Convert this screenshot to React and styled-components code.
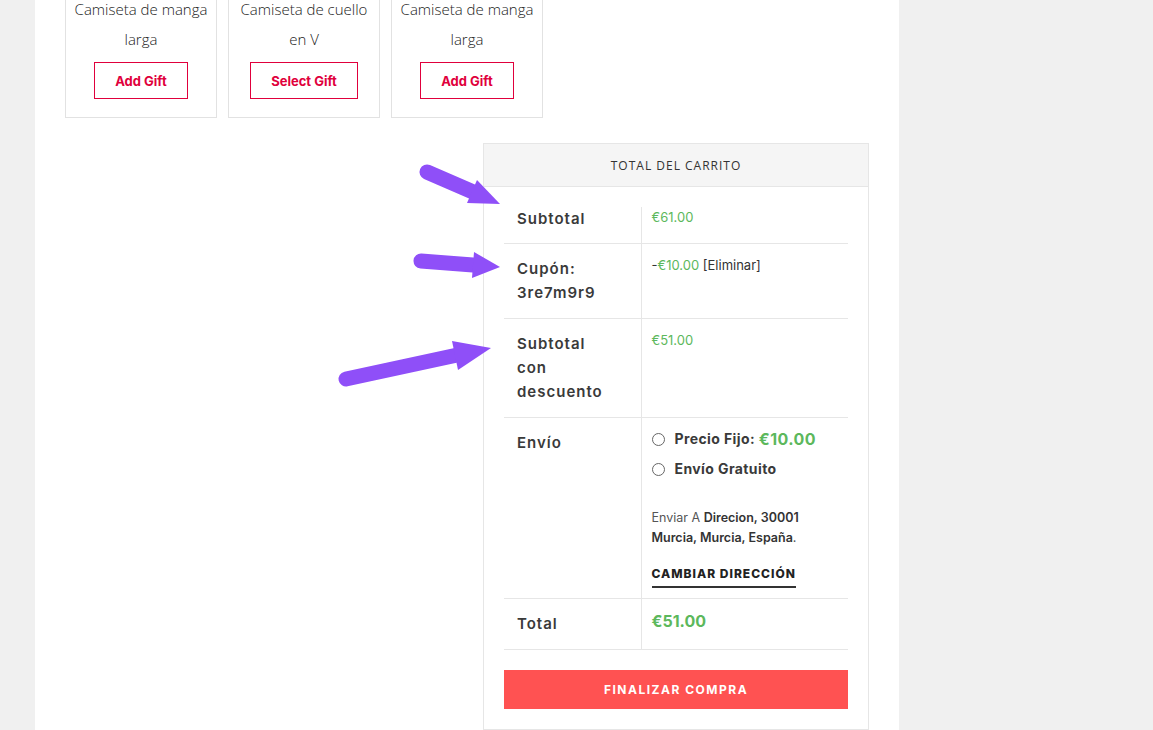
import React from 'react'
import styled, { createGlobalStyle } from 'styled-components'

const GlobalStyle = createGlobalStyle`
  html, body {
    margin: 0;
    padding: 0;
    background: #f0f0f0;
  }
  body {
    font-family: 'Inter', 'Noto Sans', sans-serif;
    color: #333;
    overflow: hidden;
  }
`

const green = '#5cb85c'
const hand = `'Open Sans', 'DejaVu Sans', sans-serif`

const Page = styled.div`
  position: relative;
  width: 1153px;
  height: 730px;
  overflow: hidden;
`

const Content = styled.main`
  margin-left: 35px;
  width: 864px;
  height: 730px;
  background: #fff;
  padding-left: 30px;
  box-sizing: border-box;
  overflow: hidden;
`

const Gifts = styled.div`
  display: flex;
  gap: 11px;
  margin-top: -6px;
`

const GiftCard = styled.div`
  width: 152px;
  box-sizing: border-box;
  border: 1px solid #e2e2e2;
  border-top: none;
  display: flex;
  flex-direction: column;
  align-items: center;
  padding: 0 0 18px;
`

const GiftTitle = styled.div`
  font-family: ${hand};
  font-weight: 300;
  font-size: 15px;
  line-height: 30px;
  color: #222;
  text-align: center;
  white-space: nowrap;
`

const GiftButton = styled.button`
  margin-top: 8px;
  height: 37px;
  padding: 0 20px;
  border: 1px solid #e0003c;
  background: #fff;
  color: #e0003c;
  font-family: 'Inter', sans-serif;
  font-weight: 700;
  font-size: 13px;
  cursor: pointer;
`

const CartBox = styled.section`
  margin: 25px 0 0 418px;
  width: 386px;
  box-sizing: border-box;
  border: 1px solid #e6e6e6;
  padding-bottom: 20px;
`

const CartHeader = styled.h2`
  margin: 0;
  height: 42px;
  display: flex;
  align-items: center;
  justify-content: center;
  background: #f5f5f5;
  border-bottom: 1px solid #e6e6e6;
  font-family: ${hand};
  font-weight: 400;
  font-size: 12px;
  letter-spacing: 1px;
  color: #333;
`

const Table = styled.table`
  margin: 20px 20px 0;
  width: 344px;
  border-collapse: collapse;
`

const Row = styled.tr`
  border-bottom: 1px solid #e6e6e6;
  &:first-child th, &:first-child td {
    padding-top: 0;
  }
  &:first-child th {
    padding-bottom: 12px;
  }
`

const Label = styled.th`
  width: 137px;
  box-sizing: border-box;
  text-align: left;
  vertical-align: top;
  padding: 13px;
  font-size: 15px;
  font-weight: 600;
  line-height: 24px;
  letter-spacing: 1px;
  color: #3a3a3a;
`

const Value = styled.td`
  vertical-align: top;
  border-left: 1px solid #e6e6e6;
  padding: ${p => p.$top || 11}px 10px 10px 10px;
  font-size: 13px;
  line-height: 20px;
  color: #333;
`

const Price = styled.span`
  color: ${green};
  font-weight: ${p => (p.$bold ? 700 : 400)};
  font-size: ${p => (p.$big ? 16 : 13)}px;
`

const Methods = styled.ul`
  list-style: none;
  margin: 0;
  padding: 0;
`

const Method = styled.li`
  display: flex;
  align-items: center;
  line-height: 20px;
  margin-bottom: 10px;
  font-size: 14px;
  font-weight: 700;
  letter-spacing: 0.4px;
  color: #3a3a3a;
`

const Radio = styled.span`
  width: 11px;
  height: 11px;
  border: 1px solid #666;
  border-radius: 50%;
  margin: 0 10px 0 0;
  flex: none;
`

const Address = styled.p`
  margin: 29px 0 0;
  font-size: 12.5px;
  line-height: 20px;
  color: #555;
  strong {
    color: #333;
    font-weight: 600;
  }
`

const ChangeLink = styled.a`
  display: inline-block;
  margin-top: 18px;
  padding-bottom: 4px;
  border-bottom: 2px solid #333;
  font-size: 12px;
  font-weight: 800;
  letter-spacing: 1px;
  line-height: 16px;
  color: #222;
  text-decoration: none;
`

const Checkout = styled.button`
  display: block;
  margin: 20px 20px 0;
  width: 344px;
  height: 39px;
  border: none;
  background: #ff5252;
  color: #fff;
  font-family: 'Inter', sans-serif;
  font-weight: 700;
  font-size: 12px;
  letter-spacing: 1.5px;
  cursor: pointer;
`

const Overlay = styled.svg`
  position: absolute;
  left: 0;
  top: 0;
  pointer-events: none;
`

const Arrow = ({ from, to, base1, base2 }) => (
  <g fill="#8f4ff8" stroke="#8f4ff8">
    <line x1={from[0]} y1={from[1]} x2={(base1[0] + base2[0]) / 2} y2={(base1[1] + base2[1]) / 2} strokeWidth="15" strokeLinecap="round" />
    <polygon points={`${base1.join(',')} ${to.join(',')} ${base2.join(',')}`} strokeWidth="0" />
  </g>
)

const gifts = [
  { lines: ['Camiseta de manga', 'larga'], button: 'Add Gift' },
  { lines: ['Camiseta de cuello', 'en V'], button: 'Select Gift' },
  { lines: ['Camiseta de manga', 'larga'], button: 'Add Gift' }
]

export default function App () {
  return (
    <Page>
      <GlobalStyle />
      <Content>
        <Gifts>
          {gifts.map((g, i) => (
            <GiftCard key={i}>
              {g.lines.map(l => <GiftTitle key={l}>{l}</GiftTitle>)}
              <GiftButton>{g.button}</GiftButton>
            </GiftCard>
          ))}
        </Gifts>

        <CartBox>
          <CartHeader>TOTAL DEL CARRITO</CartHeader>
          <Table>
            <tbody>
              <Row>
                <Label>Subtotal</Label>
                <Value><Price>€61.00</Price></Value>
              </Row>
              <Row>
                <Label>Cupón:<br />3re7m9r9</Label>
                <Value>-<Price>€10.00</Price> [Eliminar]</Value>
              </Row>
              <Row>
                <Label>Subtotal<br />con<br />descuento</Label>
                <Value><Price>€51.00</Price></Value>
              </Row>
              <Row>
                <Label>Envío</Label>
                <Value>
                  <Methods>
                    <Method><Radio />Precio Fijo:&nbsp;<Price $bold $big>€10.00</Price></Method>
                    <Method><Radio />Envío Gratuito</Method>
                  </Methods>
                  <Address>
                    Enviar A <strong>Direcion, 30001<br />Murcia, Murcia, España</strong>.
                  </Address>
                  <ChangeLink href="#">CAMBIAR DIRECCIÓN</ChangeLink>
                </Value>
              </Row>
              <Row>
                <Label>Total</Label>
                <Value $top={12}><Price $bold $big>€51.00</Price></Value>
              </Row>
            </tbody>
          </Table>
          <Checkout>FINALIZAR COMPRA</Checkout>
        </CartBox>
      </Content>

      <Overlay width="1153" height="730" viewBox="0 0 1153 730">
        <Arrow from={[427, 172]} to={[500, 204]} base1={[477, 180]} base2={[467, 203]} />
        <Arrow from={[421, 261]} to={[500, 267]} base1={[474, 252]} base2={[472, 278]} />
        <Arrow from={[346, 379]} to={[491, 348]} base1={[452, 341]} base2={[458, 370]} />
      </Overlay>
    </Page>
  )
}
